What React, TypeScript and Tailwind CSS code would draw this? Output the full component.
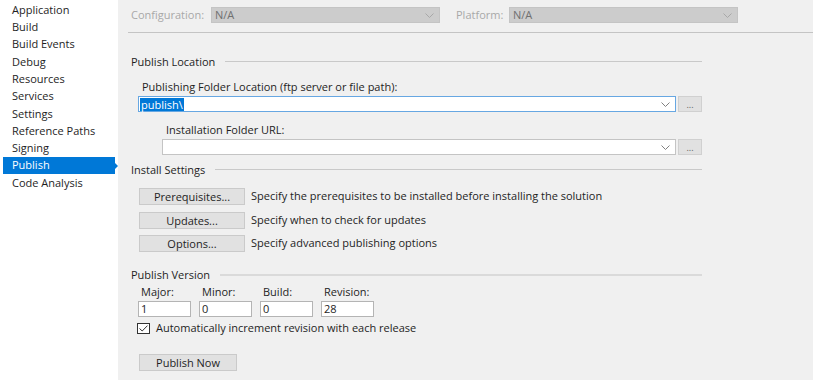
import React from "react";

const navItems = [
  "Application",
  "Build",
  "Build Events",
  "Debug",
  "Resources",
  "Services",
  "Settings",
  "Reference Paths",
  "Signing",
  "Publish",
  "Code Analysis",
];

function Chevron({ color = "#707070" }: { color?: string }) {
  return (
    <svg width="9" height="5" viewBox="0 0 9 5" className="shrink-0">
      <path d="M0.5 0.5 L4.5 4.5 L8.5 0.5" fill="none" stroke={color} strokeWidth="1" />
    </svg>
  );
}

function SectionHeader({ title, thick }: { title: string; thick?: boolean }) {
  return (
    <div className="flex items-center h-[14px] w-[571px]">
      <span className="leading-[14px] whitespace-nowrap">{title}</span>
      <div
        className={`flex-1 ml-[10px] mt-[-1px] ${thick ? "h-[2px] bg-[#dadada]" : "h-px bg-[#c9c9c9]"}`}
      />
    </div>
  );
}

function Button({ label, width }: { label: string; width: string }) {
  return (
    <button
      className={`${width} h-[17px] bg-[#e1e1e1] border border-[#cacaca] leading-[15px] text-center text-[#1e1e1e]`}
    >
      {label}
    </button>
  );
}

function Combo({ children, focused, width }: { children?: React.ReactNode; focused?: boolean; width: string }) {
  return (
    <div className="flex items-center gap-[2px]">
      <div
        className={`${width} h-[16px] bg-white border ${
          focused ? "border-[#67a7e2]" : "border-[#c4c4c4]"
        } flex items-center pl-[1px] pr-[5px]`}
      >
        <div className="flex-1 flex items-center">{children}</div>
        <Chevron color="#808080" />
      </div>
      <div className="w-[24px] h-[16px] bg-[#e1e1e1] border border-[#d0d0d0] flex items-end justify-center pb-[3px]">
        <span className="text-[9px] leading-[6px] text-[#606060]">...</span>
      </div>
    </div>
  );
}

function VersionField({ label, value }: { label: string; value: string }) {
  return (
    <div className="flex flex-col w-[53px]">
      <span className="leading-[14px] pl-[3px]">{label}</span>
      <div className="mt-[2px] h-[16px] bg-white border border-[#b4b4b4] pl-[2px] leading-[14px]">
        {value}
      </div>
    </div>
  );
}

export default function App() {
  return (
    <div
      className="flex w-[813px] h-[380px] overflow-hidden text-[11px] text-[#1e1e1e]"
      style={{ fontFamily: '"Open Sans", "Noto Sans", sans-serif' }}
    >
      {/* sidebar */}
      <div className="w-[118px] bg-white pt-[1.35px] shrink-0">
        {navItems.map((item) => {
          const selected = item === "Publish";
          return (
            <div key={item} className="relative h-[17.3px]">
              <div
                className={`h-full ml-[3px] w-[112px] pl-[9px] flex items-center ${
                  selected ? "bg-[#0078d7] text-white" : ""
                }`}
              >
                {item}
              </div>
              {selected ? (
                <div className="absolute left-[115px] top-[6px] w-0 h-0 border-y-[3px] border-y-transparent border-l-[3px] border-l-[#0078d7]" />
              ) : null}
            </div>
          );
        })}
      </div>

      {/* main */}
      <div className="flex-1 bg-[#f0f0f0] flex flex-col">
        <div className="flex items-center mt-[7px] h-[16px] pl-[13px]">
          <span className="text-[#a8a8a8] w-[80px]">Configuration:</span>
          <div className="w-[229px] h-[16px] bg-[#cccccc] border border-[#c4c4c4] flex items-center justify-between pl-[3px] pr-[5px]">
            <span className="text-[#707070]">N/A</span>
            <Chevron color="#a8a8a8" />
          </div>
          <span className="text-[#a8a8a8] ml-[16px] w-[53px]">Platform:</span>
          <div className="w-[229px] h-[16px] bg-[#cccccc] border border-[#c4c4c4] flex items-center justify-between pl-[3px] pr-[5px]">
            <span className="text-[#707070]">N/A</span>
            <Chevron color="#a8a8a8" />
          </div>
        </div>
        <div className="mt-[9px] ml-[10px] h-px bg-[#c4c4c4]" />

        <div className="pl-[13px] flex flex-col">
          <div className="mt-[22px]">
            <SectionHeader title="Publish Location" />
          </div>
          <div className="mt-[11px] ml-[11px] leading-[14px]">
            Publishing Folder Location (ftp server or file path):
          </div>
          <div className="mt-[2px] ml-[7px]">
            <Combo focused width="w-[538px]">
              <span className="bg-[#0078d7] text-white leading-[13px] px-[1px]">publish\</span>
            </Combo>
          </div>
          <div className="mt-[11px] ml-[35px] leading-[14px]">Installation Folder URL:</div>
          <div className="mt-[2px] ml-[31px]">
            <Combo width="w-[514px]">
              <span />
            </Combo>
          </div>

          <div className="mt-[8px]">
            <SectionHeader title="Install Settings" />
          </div>
          <div className="mt-[11px] ml-[8px] flex flex-col gap-[6.5px]">
            {[
              ["Prerequisites...", "Specify the prerequisites to be installed before installing the solution"],
              ["Updates...", "Specify when to check for updates"],
              ["Options...", "Specify advanced publishing options"],
            ].map(([btn, desc]) => (
              <div key={btn} className="flex items-center">
                <Button label={btn} width="w-[106px]" />
                <span className="ml-[6px]">{desc}</span>
              </div>
            ))}
          </div>

          <div className="mt-[16px]">
            <SectionHeader title="Publish Version" thick />
          </div>
          <div className="mt-[3px] ml-[7px] flex gap-[8px]">
            <VersionField label="Major:" value="1" />
            <VersionField label="Minor:" value="0" />
            <VersionField label="Build:" value="0" />
            <VersionField label="Revision:" value="28" />
          </div>
          <div className="mt-[4px] ml-[6px] flex items-center">
            <div className="w-[13px] h-[11px] border border-[#333] bg-white flex items-center justify-center">
              <svg width="9" height="7" viewBox="0 0 9 7">
                <path d="M0.5 3.5 L3.2 6 L8.5 0.6" fill="none" stroke="#333" strokeWidth="1" />
              </svg>
            </div>
            <span className="ml-[6px] leading-[14px]">Automatically increment revision with each release</span>
          </div>
          <div className="mt-[19px] ml-[8px]">
            <Button label="Publish Now" width="w-[98px]" />
          </div>
        </div>
      </div>
    </div>
  );
}
